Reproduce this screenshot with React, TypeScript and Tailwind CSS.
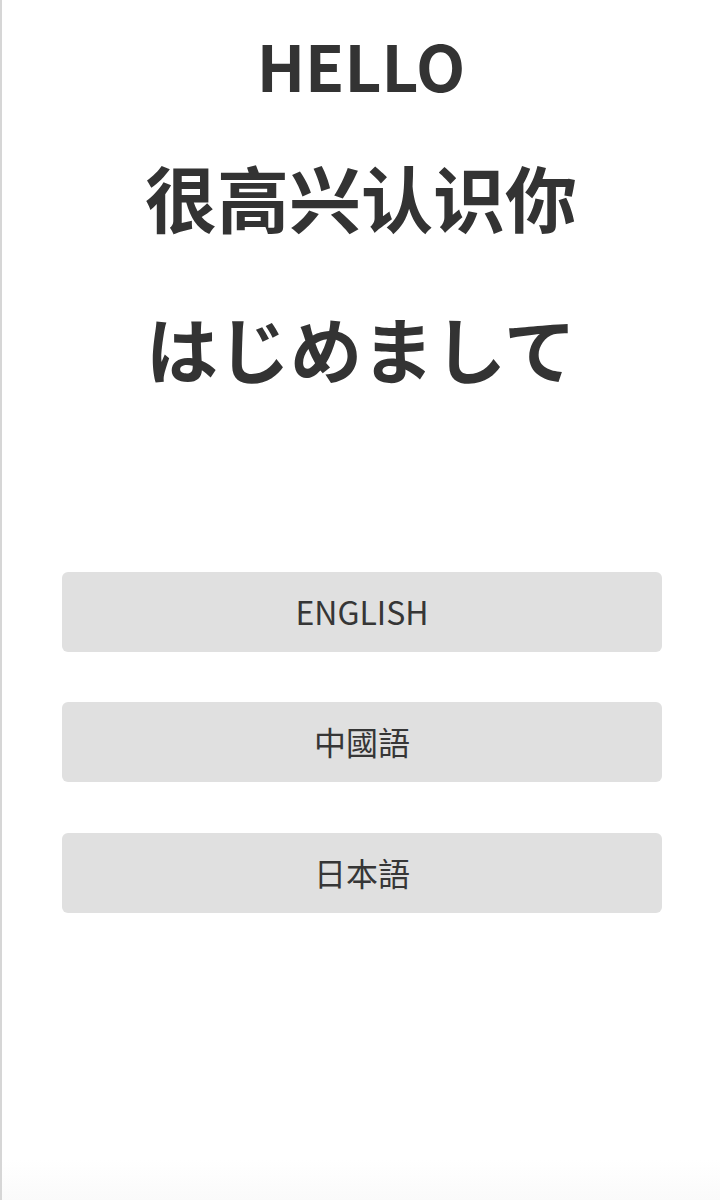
import React from "react";

export default function App() {
  const font = { fontFamily: '"Noto Sans CJK SC", "Noto Sans CJK JP", sans-serif' };
  const btn =
    "flex h-[80px] w-[600px] items-center justify-center rounded-[6px] bg-[#e0e0e0] pb-[3px] text-[32px] text-[#363636]";
  const btnFont = { fontFamily: '"Noto Sans CJK TC", "Noto Sans CJK JP", sans-serif' };
  return (
    <div
      className="relative min-h-[1200px] w-full border-l-2 border-[#d6d6d6] bg-white text-[#333333]"
      style={font}
    >
      <div className="flex flex-col items-center pt-[22px]">
        <h1 className="text-[64px] font-bold leading-[84px]">HELLO</h1>
        <h2 className="mt-[45px] text-[72px] font-bold leading-[90px]">很高兴认识你</h2>
        <h2
          className="mt-[61px] text-[72px] font-bold leading-[90px]"
          style={{ fontFamily: '"Noto Sans CJK JP", sans-serif' }}
        >
          はじめまして
        </h2>
      </div>
      <div className="mt-[180px] flex flex-col pl-[60px]">
        <button className={btn} style={btnFont}>ENGLISH</button>
        <button className={`${btn} mt-[50px]`} style={btnFont}>中國語</button>
        <button className={`${btn} mt-[51px]`} style={btnFont}>日本語</button>
      </div>
      <div className="absolute bottom-0 left-0 right-0 h-[40px] bg-gradient-to-b from-white to-[#fafafa]" />
    </div>
  );
}
